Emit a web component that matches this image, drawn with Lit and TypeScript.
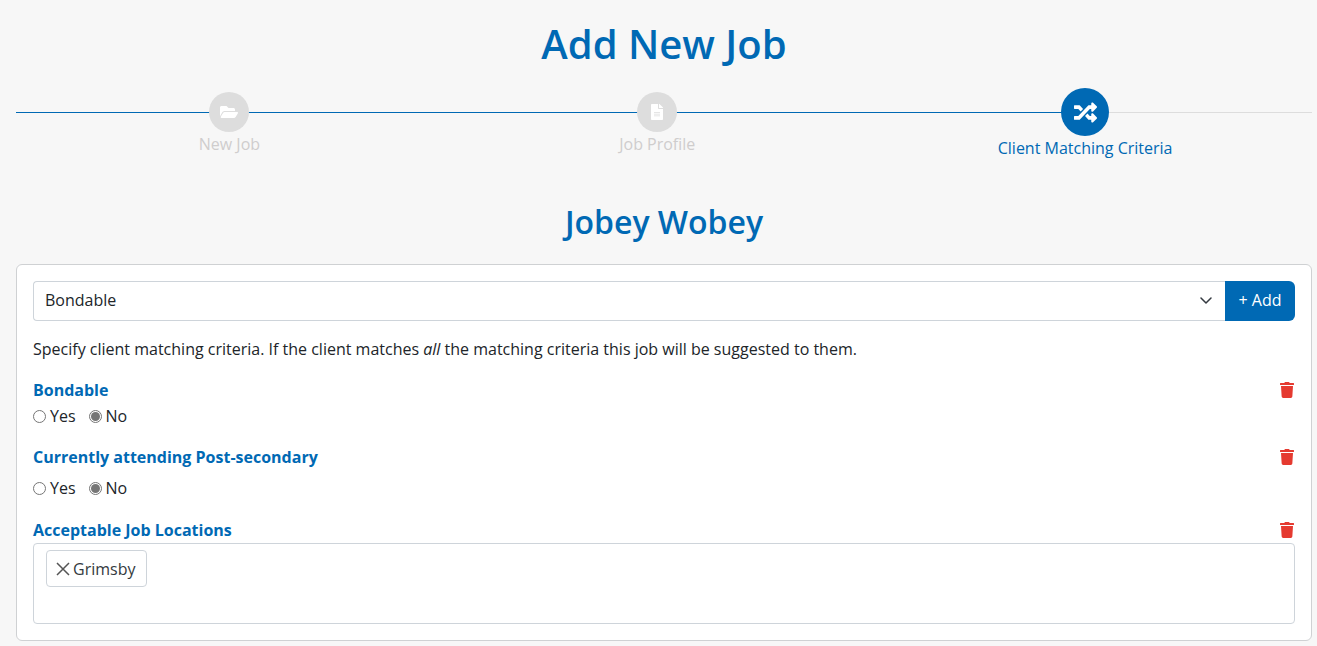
import { LitElement, html, css, svg } from "lit";
import { customElement } from "lit/decorators.js";

const trash = svg`<path d="M432 32H312l-9.400-18.700A24 24 0 0 0 281.100 0H166.800a23.700 23.700 0 0 0-21.400 13.300L136 32H16A16 16 0 0 0 0 48v32a16 16 0 0 0 16 16h416a16 16 0 0 0 16-16V48a16 16 0 0 0-16-16zM53.200 467a48 48 0 0 0 47.900 45h245.800a48 48 0 0 0 47.900-45L416 128H32z"/>`;

@customElement("app-root")
export class AppRoot extends LitElement {
  static styles = css`
    :host { display: block; height: 646px; overflow: hidden; background: #f7f7f7; font-family: "Open Sans", sans-serif; font-size: 16px; color: #212529; }
    * { box-sizing: border-box; }
    .page { padding: 0 5px 0 16px; }
    h1 { margin: 0; padding-top: 17px; height: 88px; text-align: center; font-size: 40px; line-height: 54px; font-weight: 600; color: #0069b4; }
    .stepper { position: relative; display: flex; height: 72px; align-items: flex-start; margin-left: -0.5px; }
    .line { position: absolute; top: 24px; height: 1px; }
    .line.done { left: 0.5px; width: 1069px; background: #0069b4; }
    .line.todo { left: 1069.5px; right: 0; background: #ddd; }
    .step { position: relative; width: 33%; display: flex; flex-direction: column; align-items: center; padding-top: 4px; color: #cfcdcd; line-height: 24px; }
    .dot { width: 40px; height: 40px; border-radius: 50%; background: #ddd; color: #fff; display: flex; align-items: center; justify-content: center; }
    .step.active { padding-top: 0; color: #0069b4; }
    .step.active .dot { width: 48px; height: 48px; background: #0069b4; padding-top: 1px; }
    h2 { margin: 0; height: 104px; padding-top: 40px; text-align: center; font-size: 32px; line-height: 43px; font-weight: 600; color: #0069b4; }
    .card { background: #fff; border: 1px solid #cfd1d3; border-radius: 6px; height: 377px; padding: 16px; }
    .picker { display: flex; height: 40px; }
    .select { flex: 1; border: 1px solid #ced4da; border-right: 0; border-radius: 4px 0 0 4px; display: flex; align-items: center; justify-content: space-between; padding: 0 13px 2px 11px; }
    .add { width: 70px; background: #0069b4; color: #fff; border-radius: 0 6px 6px 0; display: flex; align-items: center; justify-content: center; padding-bottom: 2px; }
    p { margin: 0; padding-top: 16px; height: 50px; line-height: 24px; }
    .head { display: flex; justify-content: space-between; align-items: center; height: 24px; font-weight: 700; color: #0069b4; }
    .trash { width: 14px; height: 16px; fill: #e53a30; display: block; margin-right: 1px; }
    .radios { display: flex; align-items: center; gap: 13px; height: 24px; }
    .radio { display: flex; align-items: center; gap: 4px; }
    .circle { width: 13px; height: 13px; border-radius: 50%; border: 1px solid #767676; background: #fff; display: flex; align-items: center; justify-content: center; }
    .circle.on::after { content: ""; width: 9px; height: 9px; border-radius: 50%; background: #767676; }
    .first { margin-top: 7px; }
    .first-radios { margin-top: 2px; }
    .second { margin-top: 17px; }
    .second-radios { margin-top: 7px; }
    .third { margin-top: 17px; height: 26px; }
    .tags { height: 81px; border: 1px solid #ced4da; border-radius: 4px; padding: 6px 12px; }
    .tag { display: inline-flex; align-items: center; gap: 3px; height: 37px; width: 101px; border: 1px solid #ced4da; border-radius: 4px; padding: 0 9px; color: #343a40; }
    .x { width: 14px; height: 14px; stroke: #555; stroke-width: 1.500; fill: none; }
  `;

  private step(label: string, icon: unknown, active = false) {
    return html`<div class="step ${active ? "active" : ""}"><div class="dot">${icon}</div><div>${label}</div></div>`;
  }

  private radios(extra = "") {
    return html`<div class="radios ${extra}">
      <label class="radio"><span class="circle"></span>Yes</label>
      <label class="radio"><span class="circle on"></span>No</label>
    </div>`;
  }

  private head(label: string, extra = "") {
    return html`<div class="head ${extra}"><span>${label}</span><svg class="trash" viewBox="0 0 448 512">${trash}</svg></div>`;
  }

  render() {
    const folder = html`<svg width="20" height="16" viewBox="0 0 576 512" fill="#fff"><path d="M572.700 292.100L500.300 416.300A64 64 0 0 1 445 448H45c-18.500 0-30.100-20.100-20.700-36.100l72.400-124.200A64 64 0 0 1 152 256h400c18.500 0 30.100 20.100 20.700 36.100zM152 224h328v-48c0-26.500-21.500-48-48-48H272l-64-64H48C21.500 64 0 85.500 0 112v278l69.100-118.400C86.200 242.300 118 224 152 224z"/></svg>`;
    const file = html`<svg width="12" height="16" viewBox="0 0 384 512"><path fill="#fff" d="M224 136V0H24C10.700 0 0 10.700 0 24v464c0 13.300 10.700 24 24 24h336c13.300 0 24-10.700 24-24V160H248c-13.200 0-24-10.800-24-24zm160-14.100v6.100H256V0h6.100c6.400 0 12.500 2.500 17 7l97.900 98c4.500 4.500 7 10.600 7 16.900z"/><path fill="#ddd" d="M96 256h192v24H96zM96 312h192v24H96zM96 368h192v24H96z"/></svg>`;
    const shuffle = html`<svg width="23" height="23" viewBox="0 0 512 512" fill="#fff"><path d="M504.971 359.029c9.373 9.373 9.373 24.569 0 33.941l-80 79.984c-15.010 15.010-40.971 4.490-40.971-16.971V416h-58.785a12.004 12.004 0 0 1-8.773-3.812l-70.556-75.596 53.333-57.143L352 336h32v-39.981c0-21.438 25.943-31.998 40.971-16.971l80 79.981zM12 176h84l52.781 56.551 53.333-57.143-70.556-75.596A11.999 11.999 0 0 0 122.785 96H12c-6.627 0-12 5.373-12 12v56c0 6.627 5.373 12 12 12zm372 0v39.984c0 21.460 25.961 31.980 40.971 16.971l80-79.984c9.373-9.373 9.373-24.569 0-33.941l-80-79.981C409.943 24.021 384 34.582 384 56.019V96h-58.785a12.004 12.004 0 0 0-8.773 3.812L96 336H12c-6.627 0-12 5.373-12 12v56c0 6.627 5.373 12 12 12h110.785c3.326 0 6.503-1.381 8.773-3.812L352 176h32z"/></svg>`;
    return html`<div class="page">
      <h1>Add New Job</h1>
      <div class="stepper">
        <div class="line done"></div>
        <div class="line todo"></div>
        ${this.step("New Job", folder)}
        ${this.step("Job Profile", file)}
        ${this.step("Client Matching Criteria", shuffle, true)}
      </div>
      <h2>Jobey Wobey</h2>
      <div class="card">
        <div class="picker">
          <div class="select"><span>Bondable</span>
            <svg width="12" height="7" viewBox="0 0 12 7" fill="none" stroke="#343a40" stroke-width="1.500" stroke-linecap="round" stroke-linejoin="round"><path d="M1 1l5 5 5-5"/></svg>
          </div>
          <div class="add">+ Add</div>
        </div>
        <p>Specify client matching criteria. If the client matches <em>all</em> the matching criteria this job will be suggested to them.</p>
        ${this.head("Bondable", "first")}
        ${this.radios("first-radios")}
        ${this.head("Currently attending Post-secondary", "second")}
        ${this.radios("second-radios")}
        ${this.head("Acceptable Job Locations", "third")}
        <div class="tags"><span class="tag"><svg class="x" viewBox="0 0 14 14"><path d="M1 1l12 12M13 1L1 13"/></svg>Grimsby</span></div>
      </div>
    </div>`;
  }
}
